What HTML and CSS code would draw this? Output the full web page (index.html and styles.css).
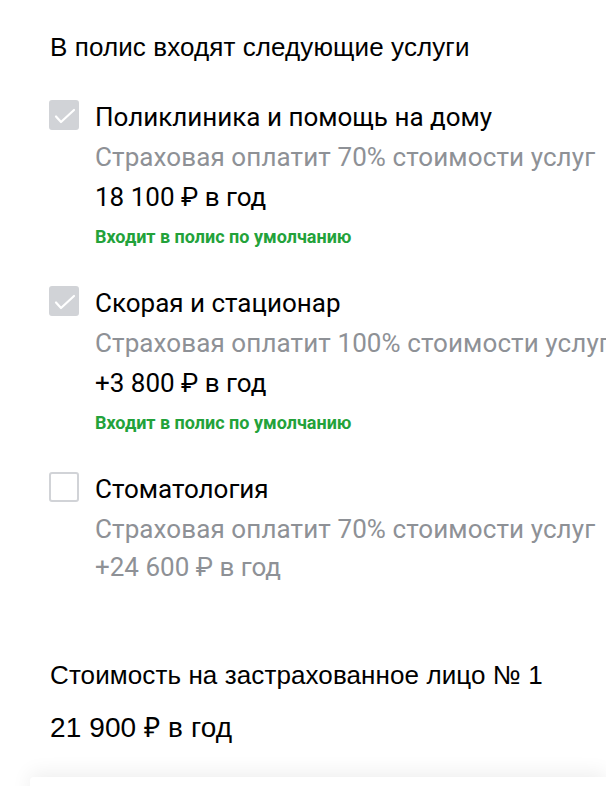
FILE: index.html
```html
<!DOCTYPE html>
<html lang="ru">
<head>
<meta charset="utf-8">
<link rel="stylesheet" href="styles.css">
</head>
<body>
<div class="page">
  <h2 class="heading">В полис входят следующие услуги</h2>
  <ul class="services">
    <li class="service">
      <span class="box box--checked"><svg viewBox="0 0 30 30"><path d="M7 16.5l5 5.5 13-12" /></svg></span>
      <div class="info">
        <div class="name">Поликлиника и помощь на дому</div>
        <div class="note">Страховая оплатит 70% стоимости услуг</div>
        <div class="price">18 100 ₽ в год</div>
        <div class="default">Входит в полис по умолчанию</div>
      </div>
    </li>
    <li class="service">
      <span class="box box--checked"><svg viewBox="0 0 30 30"><path d="M7 16.5l5 5.5 13-12" /></svg></span>
      <div class="info">
        <div class="name">Скорая и стационар</div>
        <div class="note">Страховая оплатит 100% стоимости услуг</div>
        <div class="price">+3 800 ₽ в год</div>
        <div class="default">Входит в полис по умолчанию</div>
      </div>
    </li>
    <li class="service">
      <span class="box"></span>
      <div class="info">
        <div class="name">Стоматология</div>
        <div class="note">Страховая оплатит 70% стоимости услуг</div>
        <div class="price price--muted">+24 600 ₽ в год</div>
      </div>
    </li>
  </ul>
  <div class="total">
    <div class="total-label">Стоимость на застрахованное лицо № 1</div>
    <div class="total-value">21 900 ₽ в год</div>
  </div>
  <div class="card"></div>
</div>
</body>
</html>
```
FILE: styles.css
```css
html, body {
  margin: 0;
  padding: 0;
  background: #fff;
  overflow: hidden;
}
.page {
  width: 606px;
  height: 786px;
  overflow: hidden;
  white-space: nowrap;
  font-family: Roboto, "Liberation Sans", sans-serif;
  color: #000;
}
.heading {
  margin: 0;
  padding: 32px 0 0 50px;
  font-family: "Liberation Sans", Arial, sans-serif;
  font-weight: 400;
  font-size: 26px;
  line-height: 30px;
  letter-spacing: 0.1px;
}
.services {
  list-style: none;
  margin: 0;
  padding: 35px 0 0 49px;
}
.service {
  display: flex;
  gap: 16px;
  margin-bottom: 34px;
}
.service:last-child { margin-bottom: 0; }
.box {
  flex: none;
  width: 30px;
  height: 30px;
  box-sizing: border-box;
  border: 2px solid #d1d3d7;
  border-radius: 3px;
  margin-top: 3px;
  display: flex;
  align-items: center;
  justify-content: center;
}
.box--checked { background: #d1d3d7; }
.box svg { width: 30px; height: 30px; flex: none; }
.box path {
  fill: none;
  stroke: #fff;
  stroke-width: 2.2;
  stroke-linecap: round;
  stroke-linejoin: round;
}
.info { display: flex; flex-direction: column; }
.name, .note, .price {
  font-size: 26px;
  line-height: 40px;
}
.note { color: #8e9196; letter-spacing: 0.1px; }
.price--muted { color: #8e9196; margin-top: -2px; }
.default {
  font-size: 18px;
  font-weight: 700;
  color: #23a23a;
  line-height: 24px;
  margin-top: 8px;
}
.total {
  padding: 73px 0 0 50px;
  font-family: "Liberation Sans", Arial, sans-serif;
  letter-spacing: 0.1px;
}
.total-label { font-size: 26px; line-height: 30px; }
.total-value { font-size: 28px; line-height: 34px; margin-top: 21px; }
.card {
  margin: 32px 0 0 30px;
  height: 40px;
  background: #fff;
  border-radius: 4px 0 0 0;
  box-shadow: 0 -4px 20px rgba(0,0,0,0.07);
}
```
